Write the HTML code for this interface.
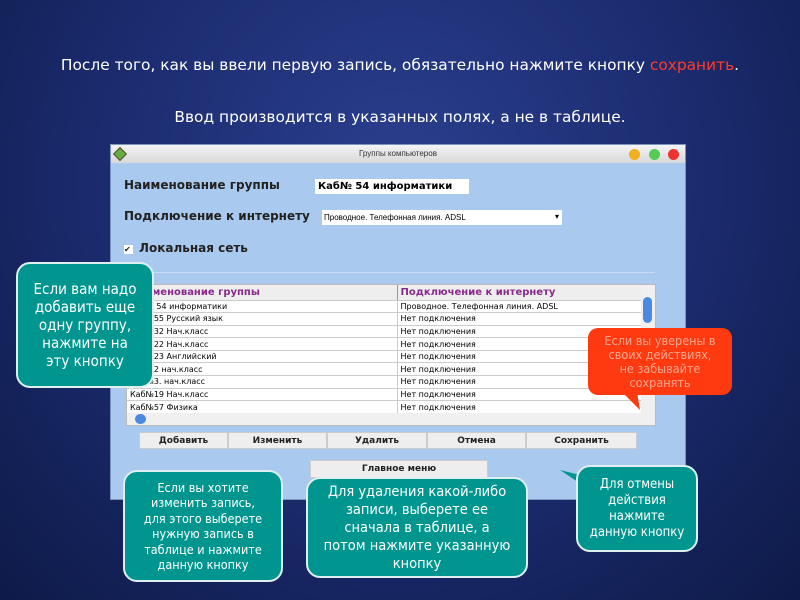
<!DOCTYPE html>
<html><head><meta charset="utf-8"><style>
*{margin:0;padding:0;box-sizing:border-box}
body{width:800px;height:600px;overflow:hidden;position:relative;font-family:"Liberation Sans",sans-serif;
background:radial-gradient(ellipse at 50% 30%,#2a3f8e 0%,#1c2c70 50%,#0e1a48 100%);}
.abs{position:absolute}
.t1{left:0;width:800px;top:56px;text-align:center;color:#fff;font-size:15.4px;font-family:"DejaVu Sans",sans-serif}
.t2{left:0;width:800px;top:108px;text-align:center;color:#fff;font-size:15.4px;font-family:"DejaVu Sans",sans-serif}
.win{left:110px;top:144px;width:576px;height:356px;background:#a9c9ee;border:1px solid #7a96c0}
.title{left:0;top:0;width:100%;height:18px;background:linear-gradient(#f4f4f4,#d8d8d8);font-size:8px;text-align:center;line-height:18px;color:#333}
.lbl{font-size:12px;font-weight:bold;color:#222;font-family:"DejaVu Sans",sans-serif}
.inp{background:#fff;font-size:10px;font-weight:bold;font-family:"DejaVu Sans",sans-serif}
table{border-collapse:collapse;font-size:8px;font-family:"DejaVu Sans",sans-serif}
td{height:12.6px;border-bottom:1px solid #ccc;padding-left:3px;white-space:nowrap;overflow:hidden}
.btn{position:absolute;top:0;height:17px;background:#eee;border:1px solid #ccc;font-size:9px;font-weight:bold;text-align:center;line-height:16px;font-family:"DejaVu Sans",sans-serif;color:#222}
.call{position:absolute;background:#00968f;border:2px solid #dfeeee;border-radius:14px;color:#fff;text-align:center;font-family:"DejaVu Sans Condensed","DejaVu Sans",sans-serif;font-stretch:condensed;display:flex;align-items:center;justify-content:center;white-space:nowrap}
</style></head><body>
<div class="abs t1">После того, как вы ввели первую запись, обязательно нажмите кнопку <span style="color:#ff3b2a">сохранить</span>.</div>
<div class="abs t2">Ввод производится в указанных полях, а не в таблице.</div>
<div class="abs win">
 <div class="abs title">Группы компьютеров</div>
 <div class="abs" style="left:4px;top:4px;width:10px;height:10px;background:#6a4;transform:rotate(45deg);border:1px solid #553"></div>
 <div class="abs" style="left:518px;top:4px;width:11px;height:11px;border-radius:50%;background:#f0b020"></div>
 <div class="abs" style="left:538px;top:4px;width:11px;height:11px;border-radius:50%;background:#5c5"></div>
 <div class="abs" style="left:557px;top:4px;width:11px;height:11px;border-radius:50%;background:#e33"></div>
 <div class="abs lbl" style="left:13px;top:33px">Наименование группы</div>
 <div class="abs inp" style="left:204px;top:34px;width:154px;height:15px;padding:2px 3px">Каб№ 54 информатики</div>
 <div class="abs lbl" style="left:13px;top:64px">Подключение к интернету</div>
 <div class="abs" style="left:211px;top:65px;width:240px;height:15px;background:#fff;font-size:8px;padding:3px 2px">Проводное. Телефонная линия. ADSL<span style="position:absolute;right:3px;top:2px">▾</span></div>
 <div class="abs lbl" style="left:13px;top:96px"><span style="display:inline-block;width:9px;height:9px;background:#fff;font-size:8px;line-height:9px;margin-right:6px">✔</span>Локальная сеть</div>
 <div class="abs" style="left:14px;top:127px;width:530px;height:1px;background:#c8dcf4"></div>
 <div class="abs" style="left:15px;top:139px;width:530px;height:142px;background:#fff;border:1px solid #bbb">
  <table style="width:514px">
   <tr style="color:#8a2a8a;font-weight:bold;font-size:10px;background:#eee"><td style="width:270px;height:15px;border-right:1px solid #999">Наименование группы</td><td>Подключение к интернету</td></tr>
   <tr><td style="border-right:1px solid #ccc">Каб№ 54 информатики</td><td>Проводное. Телефонная линия. ADSL</td></tr>
   <tr><td style="border-right:1px solid #ccc">Каб№55 Русский язык</td><td>Нет подключения</td></tr>
   <tr><td style="border-right:1px solid #ccc">Каб№32 Нач.класс</td><td>Нет подключения</td></tr>
   <tr><td style="border-right:1px solid #ccc">Каб№22 Нач.класс</td><td>Нет подключения</td></tr>
   <tr><td style="border-right:1px solid #ccc">Каб№23 Английский</td><td>Нет подключения</td></tr>
   <tr><td style="border-right:1px solid #ccc">Каб№2 нач.класс</td><td>Нет подключения</td></tr>
   <tr><td style="border-right:1px solid #ccc">Каб№3. нач.класс</td><td>Нет подключения</td></tr>
   <tr><td style="border-right:1px solid #ccc">Каб№19 Нач.класс</td><td>Нет подключения</td></tr>
   <tr><td style="border-right:1px solid #ccc">Каб№57 Физика</td><td>Нет подключения</td></tr>
  </table>
  <div class="abs" style="right:0;top:0;width:14px;height:128px;background:#f0f0f0"><div style="margin:12px 2px;width:9px;height:26px;background:#4a8ae0;border-radius:5px"></div></div>
  <div class="abs" style="left:0;bottom:0;width:100%;height:12px;background:#f0f0f0"><div style="margin:1px 8px;width:11px;height:10px;background:#4a8ae0;border-radius:5px"></div></div>
 </div>
 <div class="abs" style="left:28px;top:287px;width:498px;height:17px">
  <div class="btn" style="left:0;width:89px">Добавить</div>
  <div class="btn" style="left:89px;width:99px">Изменить</div>
  <div class="btn" style="left:188px;width:100px">Удалить</div>
  <div class="btn" style="left:288px;width:99px">Отмена</div>
  <div class="btn" style="left:387px;width:111px">Сохранить</div>
 </div>
 <div class="btn" style="left:199px;top:315px;width:178px;height:18px;line-height:17px">Главное меню</div>
</div>
<svg class="abs" style="left:0;top:0" width="800" height="600">
 <polygon points="112,355 132,390 140,355" fill="#00968f" stroke="#dfeeee" stroke-width="2"/>
 <polygon points="610,380 640,410 635,380" fill="#ff3a10"/>
 <polygon points="275,495 245,540 275,525" fill="#00968f"/>
 <polygon points="520,495 480,510 520,520" fill="#00968f"/>
 <polygon points="590,490 560,470 600,480" fill="#00968f"/>
</svg>
<div class="call" style="left:16px;top:262px;width:138px;height:126px;font-size:15px;line-height:18px">Если вам надо<br>добавить еще<br>одну группу,<br>нажмите на<br>эту кнопку</div>
<div class="call" style="left:588px;top:328px;width:144px;height:67px;background:#ff3a10;border:none;border-radius:10px;color:#f8a890;font-size:12.5px;line-height:14px">Если вы уверены в<br>своих действиях,<br>не забывайте<br>сохранять</div>
<div class="call" style="left:123px;top:470px;width:160px;height:112px;font-size:12.5px;line-height:15.5px">Если вы хотите<br>изменить запись,<br>для этого выберете<br>нужную запись в<br>таблице и нажмите<br>данную кнопку</div>
<div class="call" style="left:306px;top:477px;width:222px;height:101px;font-size:14.5px;line-height:18px">Для удаления какой-либо<br>записи, выберете ее<br>сначала в таблице, а<br>потом нажмите указанную<br>кнопку</div>
<div class="call" style="left:576px;top:465px;width:122px;height:87px;font-size:13px;line-height:16px">Для отмены<br>действия<br>нажмите<br>данную кнопку</div>
</body></html>
